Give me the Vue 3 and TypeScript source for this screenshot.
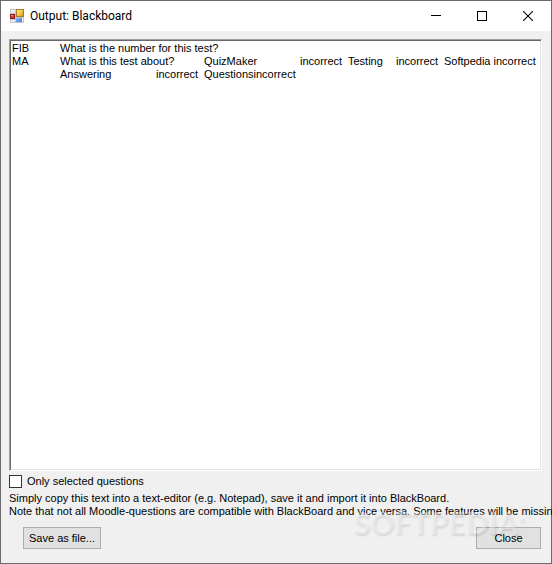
<script setup lang="ts">
import { ref } from 'vue'

const onlySelected = ref(false)
const output = ref(
  [
    'FIB\tWhat is the number for this test?',
    'MA\tWhat is this test about?\tQuizMaker\tincorrect\tTesting\tincorrect\tSoftpedia incorrect',
    '\tAnswering\tincorrect\tQuestionsincorrect',
  ].join('\n'),
)
</script>

<template>
  <main class="window">
    <header class="titlebar">
      <svg class="app-icon" viewBox="0 0 14 14" width="14" height="14" aria-hidden="true">
        <defs>
          <linearGradient id="gold" x1="0" y1="0" x2="1" y2="1">
            <stop offset="0" stop-color="#fff0a0" />
            <stop offset="0.5" stop-color="#f8c840" />
            <stop offset="1" stop-color="#d89818" />
          </linearGradient>
          <linearGradient id="blue" x1="0" y1="0" x2="1" y2="1">
            <stop offset="0" stop-color="#8cbcf8" />
            <stop offset="1" stop-color="#3f78dc" />
          </linearGradient>
        </defs>
        <rect width="14" height="14" fill="#c4c6ca" />
        <path d="M1 1h4v3H1zM1 11h4v2H1z" fill="#e9eaec" />
        <rect x="6" width="8" height="8" fill="#a87a28" />
        <rect x="7" y="1" width="6" height="6" fill="url(#gold)" />
        <rect y="5" width="5" height="5" fill="#8c1c18" />
        <rect x="1" y="6" width="3" height="3" fill="#d84038" />
        <rect x="1" y="6" width="2" height="1" fill="#f09088" />
        <rect x="6" y="9" width="6" height="4" fill="url(#blue)" />
        <rect x="12" y="9" width="1" height="4" fill="#f4f5f7" />
      </svg>
      <h1 class="title">Output: Blackboard</h1>
      <nav class="controls">
        <button type="button" class="control" aria-label="Minimize">
          <svg width="10" height="10" viewBox="0 0 10 10"><path d="M0 4.5h10" stroke="#000" /></svg>
        </button>
        <button type="button" class="control" aria-label="Maximize">
          <svg width="10" height="10" viewBox="0 0 10 10"><rect x=".5" y=".5" width="9" height="9" fill="none" stroke="#000" /></svg>
        </button>
        <button type="button" class="control" aria-label="Close window">
          <svg width="10" height="10" viewBox="0 0 10 10"><path d="M0 0l10 10M10 0L0 10" stroke="#000" stroke-width="1.1" /></svg>
        </button>
      </nav>
    </header>

    <section class="body">
      <textarea v-model="output" class="output" aria-label="Output" readonly spellcheck="false" wrap="off"></textarea>
      <label class="option">
        <input v-model="onlySelected" type="checkbox" class="checkbox" />
        <span>Only selected questions</span>
      </label>
      <p class="note">
        Simply copy this text into a text-editor (e.g. Notepad), save it and import it into BlackBoard.<br />
        Note that not all Moodle-questions are compatible with BlackBoard and vice versa. Some features will be missing.
      </p>
      <footer class="actions">
        <button type="button" class="button">Save as file...</button>
        <button type="button" class="button">Close</button>
        <div class="watermark">SOFTPEDIA<span class="mark">®</span></div>
      </footer>
    </section>
  </main>
</template>

<style>
body {
  margin: 0;
}
</style>

<style scoped>
.window {
  box-sizing: border-box;
  min-height: 100vh;
  display: flex;
  flex-direction: column;
  border: 1px solid #6c6a6c;
  background: #f0f0f0;
  color: #000;
  font-family: "Liberation Sans", Arial, sans-serif;
  font-size: 11px;
  line-height: 13px;
}

.titlebar {
  display: flex;
  align-items: center;
  height: 30px;
  padding-left: 9px;
  background: #fff;
}

.app-icon {
  flex: none;
}

.title {
  margin: 0 0 0 6px;
  font-family: Roboto, "Noto Sans", sans-serif;
  font-size: 12px;
  font-weight: 400;
  line-height: 16px;
  white-space: nowrap;
}

.controls {
  display: flex;
  align-self: stretch;
  margin-left: auto;
}

.control {
  display: flex;
  align-items: center;
  justify-content: center;
  width: 46px;
  padding: 0;
  border: 0;
  background: transparent;
}

.control:hover {
  background: #e5e5e5;
}

.body {
  flex: 1;
  display: flex;
  flex-direction: column;
  padding: 8px 9px 9px 8px;
}

.output {
  box-sizing: border-box;
  flex: 1;
  width: 100%;
  min-height: 120px;
  margin: 0;
  padding: 2px;
  border: 1px solid;
  border-color: #a0a0a0 #fff #fff #a0a0a0;
  border-radius: 0;
  outline: 0;
  background: #fff;
  box-shadow: inset 1px 1px #696969, inset -1px -1px #e3e3e3;
  color: #000;
  font: inherit;
  tab-size: 48px;
  resize: none;
  overflow: hidden;
  white-space: pre;
}

.option {
  display: flex;
  align-items: center;
  align-self: flex-start;
  gap: 5px;
  margin-top: 4px;
}

.checkbox {
  appearance: none;
  box-sizing: border-box;
  width: 13px;
  height: 13px;
  margin: 0;
  border: 1px solid #333;
  background: #fff;
}

.checkbox:checked {
  background: #333;
  box-shadow: inset 0 0 0 2px #fff;
}

.note {
  margin: 4px 0 0;
  white-space: nowrap;
}

.actions {
  position: relative;
  display: flex;
  justify-content: space-between;
  margin-top: 9px;
  padding: 0 1px 5px 14px;
}

.button {
  box-sizing: border-box;
  min-width: 65px;
  height: 22px;
  padding: 0 5px;
  border: 1px solid #adadad;
  border-radius: 0;
  background: #e1e1e1;
  color: #000;
  font: inherit;
}

.watermark {
  position: absolute;
  right: 17px;
  bottom: 12px;
  color: rgba(255, 255, 255, 0.4);
  font-family: Lato, sans-serif;
  font-size: 30px;
  font-weight: 900;
  line-height: 40px;
  text-shadow: 1px 2px 2px rgba(0, 0, 0, 0.1);
  white-space: nowrap;
  pointer-events: none;
}

.mark {
  font-size: 8px;
  line-height: 8px;
  vertical-align: 12px;
}
</style>
